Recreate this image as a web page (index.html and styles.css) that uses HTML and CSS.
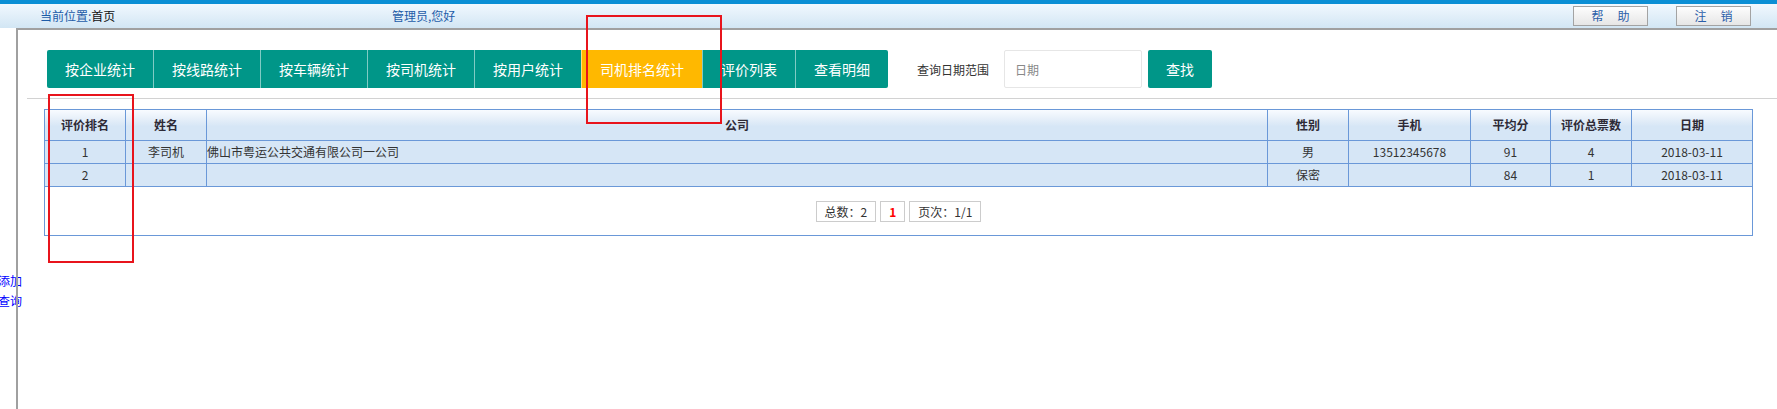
FILE: index.html
```html
<!DOCTYPE html>
<html lang="zh-CN">
<head>
<meta charset="utf-8">
<title>司机排名统计</title>
<link rel="stylesheet" href="styles.css">
</head>
<body>
<div class="topbar"></div>
<div class="header">
  <div class="location"><span>当前位置:</span><span class="loc-page">首页</span></div>
  <div class="welcome">管理员,您好</div>
  <div class="header-actions">
    <a class="hbtn" href="#"><span>帮</span><span>助</span></a>
    <a class="hbtn" href="#"><span>注</span><span>销</span></a>
  </div>
</div>
<div class="main">
  <div class="sidebar">
    <a href="#">添加</a>
    <a href="#">查询</a>
  </div>
  <div class="content">
    <div class="toolbar">
      <div class="btn-group">
        <a class="btn" href="#">按企业统计</a>
        <a class="btn" href="#">按线路统计</a>
        <a class="btn" href="#">按车辆统计</a>
        <a class="btn" href="#">按司机统计</a>
        <a class="btn" href="#">按用户统计</a>
        <a class="btn active" href="#">司机排名统计</a>
        <a class="btn" href="#">评价列表</a>
        <a class="btn" href="#">查看明细</a>
      </div>
      <label class="date-label">查询日期范围</label>
      <input class="date-input" type="text" placeholder="日期">
      <button class="btn search" type="button">查找</button>
    </div>
    <hr class="divider">
    <div class="grid">
      <table>
        <colgroup>
          <col class="c81"><col class="c81"><col><col class="c81"><col class="c122"><col class="c80"><col class="c81"><col class="c120">
        </colgroup>
        <thead>
          <tr>
            <th>评价排名</th><th>姓名</th><th>公司</th><th>性别</th><th>手机</th><th>平均分</th><th>评价总票数</th><th>日期</th>
          </tr>
        </thead>
        <tbody>
          <tr>
            <td>1</td><td>李司机</td><td class="left">佛山市粤运公共交通有限公司一公司</td><td>男</td><td>13512345678</td><td>91</td><td>4</td><td>2018-03-11</td>
          </tr>
          <tr>
            <td>2</td><td></td><td class="left"></td><td>保密</td><td></td><td>84</td><td>1</td><td>2018-03-11</td>
          </tr>
        </tbody>
      </table>
      <div class="pager">
        <span class="pg">总数：2</span>
        <span class="pg cur">1</span>
        <span class="pg">页次：1/1</span>
      </div>
    </div>
  </div>
</div>
<div class="mark mark-tab"></div>
<div class="mark mark-col"></div>
</body>
</html>
```
FILE: styles.css
```css
* { box-sizing: border-box; }
html, body { margin: 0; padding: 0; }
body {
  position: relative;
  width: 1777px;
  height: 409px;
  overflow: hidden;
  font-family: "Noto Sans CJK SC", "Liberation Sans", sans-serif;
  font-size: 12px;
  color: #333;
  background: #fff;
}
.topbar { height: 4px; background: #0b8fd5; }
.header {
  height: 24px;
  display: flex;
  align-items: center;
  background: linear-gradient(#f1f8fe, #d2e6f4);
}
.location {
  width: 352px;
  margin-left: 40px;
  color: #1d5ca8;
  line-height: 24px;
  white-space: nowrap;
}
.loc-page { color: #111; }
.welcome { flex: 1; color: #1d5ca8; line-height: 24px; }
.header-actions { display: flex; gap: 28px; margin-right: 26px; }
.hbtn {
  width: 75px;
  height: 20px;
  display: flex;
  justify-content: center;
  align-items: center;
  gap: 14px;
  border: 1px solid #a3a3a3;
  background: linear-gradient(#fdfdfd, #e6e6e6);
  color: #2b5ea9;
  text-decoration: none;
  line-height: 18px;
}
.main { display: flex; height: 381px; }
.sidebar {
  width: 16px;
  flex: none;
  padding-top: 243px;
  display: flex;
  flex-direction: column;
}
.sidebar a {
  display: block;
  margin-left: -2px;
  color: #0000ff;
  text-decoration: none;
  line-height: 20px;
  white-space: nowrap;
}
.content {
  flex: 1;
  min-width: 0;
  border-top: 2px solid #a0a0a0;
  border-left: 2px solid #a0a0a0;
}
.toolbar {
  display: flex;
  align-items: center;
  height: 38px;
  margin: 20px 0 0 29px;
}
.btn-group { display: flex; }
.btn {
  display: block;
  height: 38px;
  line-height: 38px;
  padding: 0 18px;
  font-family: inherit;
  font-size: 14px;
  color: #fff;
  background: #009688;
  border: 0;
  border-left: 1px solid rgba(255, 255, 255, 0.5);
  white-space: nowrap;
  text-decoration: none;
}
.btn:first-child { border-left: 0; border-radius: 2px 0 0 2px; }
.btn:last-child { border-radius: 0 2px 2px 0; }
.btn.active { background: #ffb800; }
.date-label { margin-left: 29px; font-size: 12px; color: #333; white-space: nowrap; }
.date-input {
  margin-left: 15px;
  width: 138px;
  height: 38px;
  border: 1px solid #e6e6e6;
  border-radius: 2px;
  padding: 0 0 0 10px;
  font-family: inherit;
  font-size: 12px;
  color: #333;
  outline: none;
}
.date-input::placeholder { color: #888; }
.btn.search { margin-left: 6px; border-left: 0; border-radius: 2px; }
.divider {
  margin: 10px 0 0 9px;
  border: 0;
  height: 1px;
  background: #d2d2d2;
}
.grid {
  margin: 10px 24px 0 26px;
  border: 1px solid #6a98d8;
}
.grid table {
  width: 100%;
  table-layout: fixed;
  border-collapse: separate;
  border-spacing: 0;
}
.c81 { width: 81px; }
.c80 { width: 80px; }
.c120 { width: 120px; }
.c122 { width: 122px; }
.grid th, .grid td {
  padding: 0;
  text-align: center;
  border-right: 1px solid #6a98d8;
  border-bottom: 1px solid #6a98d8;
  white-space: nowrap;
  overflow: hidden;
}
.grid th:last-child, .grid td:last-child { border-right: 0; }
.grid th {
  line-height: 30px;
  font-weight: bold;
  color: #2e2a36;
  background: linear-gradient(#f8fbff 0%, #e6eff9 30%, #d6e6f6 55%, #d6e6f6 100%);
}
.grid td {
  line-height: 22px;
  color: #333;
  background: #d6e6f6;
}
.grid td.left { text-align: left; }
.pager {
  height: 48px;
  display: flex;
  justify-content: center;
  align-items: center;
  gap: 4px;
}
.pg {
  height: 21px;
  line-height: 19px;
  padding: 0 8px;
  border: 1px solid #ccc;
  color: #333;
  white-space: nowrap;
}
.pg.cur { color: #f00; font-weight: bold; }
.mark {
  position: absolute;
  border: 2px solid #e8141c;
  pointer-events: none;
}
.mark-tab { left: 586px; top: 15px; width: 136px; height: 109px; }
.mark-col { left: 48px; top: 94px; width: 86px; height: 169px; }
```
